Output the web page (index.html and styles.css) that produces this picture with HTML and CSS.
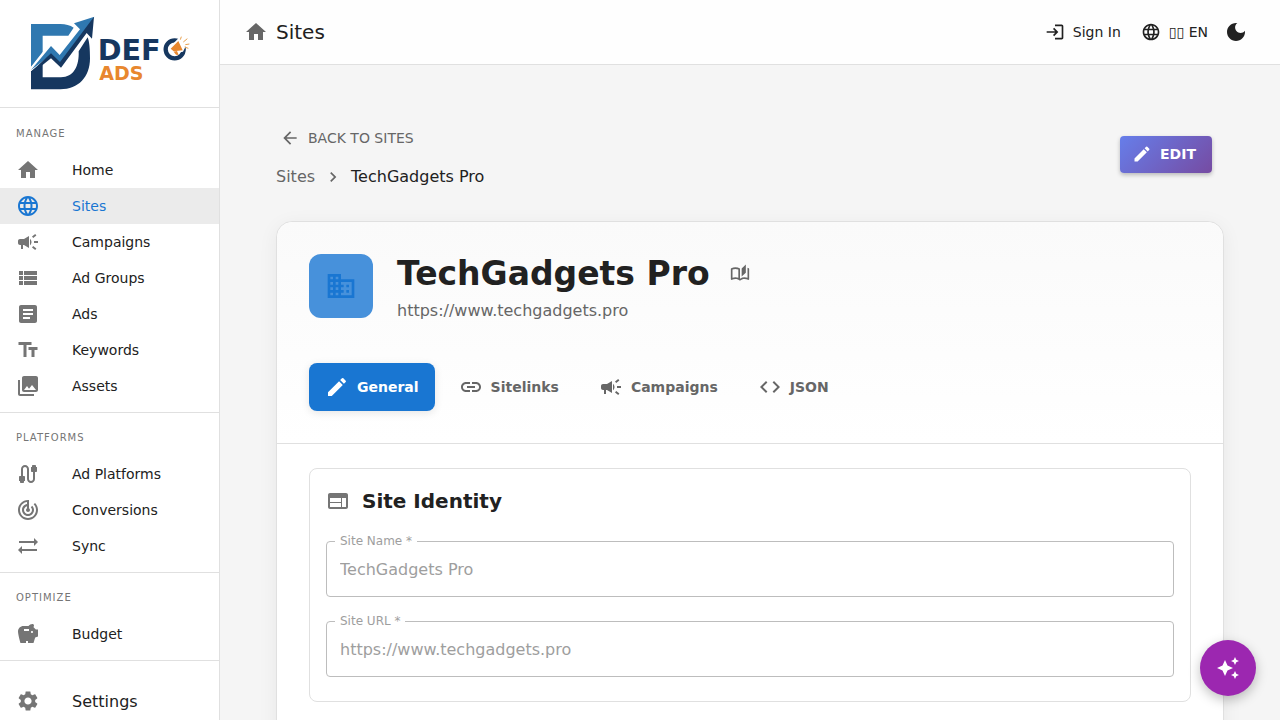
FILE: index.html
```html
<!DOCTYPE html>
<html lang="en">
<head>
    <meta charset="UTF-8">
    <meta name="viewport" content="width=device-width, initial-scale=1.0">
    <title>TechGadgets Pro - Defo Ads</title>
    <link rel="stylesheet" href="styles.css">
</head>
<body>
    <!-- Icon set -->
    <svg class="sprite" aria-hidden="true">
        <symbol id="i-home" viewBox="0 0 24 24"><path d="M10 20v-6h4v6h5v-8h3L12 3 2 12h3v8z"/></symbol>
        <symbol id="i-globe" viewBox="0 0 24 24"><path d="M11.99 2C6.47 2 2 6.48 2 12s4.47 10 9.99 10C17.52 22 22 17.52 22 12S17.52 2 11.99 2zm6.93 6h-2.95c-.32-1.25-.78-2.45-1.38-3.56 1.84.63 3.37 1.91 4.33 3.56zM12 4.04c.83 1.2 1.48 2.53 1.91 3.96h-3.82c.43-1.43 1.08-2.76 1.91-3.96zM4.26 14C4.1 13.36 4 12.69 4 12s.1-1.36.26-2h3.38c-.08.66-.14 1.32-.14 2s.06 1.34.14 2H4.26zm.82 2h2.95c.32 1.25.78 2.45 1.38 3.56-1.84-.63-3.37-1.9-4.33-3.56zm2.95-8H5.08c.96-1.66 2.49-2.93 4.33-3.56C8.81 5.55 8.35 6.75 8.03 8zM12 19.96c-.83-1.2-1.48-2.53-1.91-3.96h3.82c-.43 1.43-1.08 2.76-1.91 3.96zM14.34 14H9.66c-.09-.66-.16-1.32-.16-2s.07-1.35.16-2h4.68c.09.65.16 1.32.16 2s-.07 1.34-.16 2zm.25 5.56c.6-1.11 1.06-2.31 1.38-3.56h2.95c-.96 1.65-2.49 2.93-4.33 3.56zM16.36 14c.08-.66.14-1.32.14-2s-.06-1.34-.14-2h3.38c.16.64.26 1.31.26 2s-.1 1.36-.26 2h-3.38z"/></symbol>
        <symbol id="i-campaign" viewBox="0 0 24 24"><path d="M18 11v2h4v-2h-4zM16 17.61c.96.71 2.21 1.65 3.2 2.39.4-.53.8-1.07 1.2-1.6-.99-.74-2.24-1.68-3.2-2.4-.4.54-.8 1.08-1.2 1.61zM20.4 5.6c-.4-.53-.8-1.07-1.2-1.6-.99.74-2.24 1.68-3.2 2.4.4.53.8 1.07 1.2 1.6.96-.72 2.21-1.65 3.2-2.4zM4 9c-1.1 0-2 .9-2 2v2c0 1.1.9 2 2 2h1v4h2v-4h1l5 3V6L8 9H4zM15.5 12c0-1.33-.58-2.53-1.5-3.35v6.69c.92-.81 1.5-2.01 1.5-3.34z"/></symbol>
        <symbol id="i-list" viewBox="0 0 24 24"><path d="M3 14h4v-4H3v4zm0 5h4v-4H3v4zM3 9h4V5H3v4zm5 5h13v-4H8v4zm0 5h13v-4H8v4zM8 5v4h13V5H8z"/></symbol>
        <symbol id="i-article" viewBox="0 0 24 24"><path d="M19 3H5c-1.1 0-2 .9-2 2v14c0 1.1.9 2 2 2h14c1.1 0 2-.9 2-2V5c0-1.1-.9-2-2-2zm-5 14H7v-2h7v2zm3-4H7v-2h10v2zm0-4H7V7h10v2z"/></symbol>
        <symbol id="i-text" viewBox="0 0 24 24"><path d="M2.5 4v3h5v12h3V7h5V4h-13zm19 5h-9v3h3v7h3v-7h3V9z"/></symbol>
        <symbol id="i-photos" viewBox="0 0 24 24"><path d="M22 16V4c0-1.1-.9-2-2-2H8c-1.1 0-2 .9-2 2v12c0 1.1.9 2 2 2h12c1.1 0 2-.9 2-2zm-11-4 2.03 2.71L16 11l4 5H8l3-4zM2 6v14c0 1.1.9 2 2 2h14v-2H4V6H2z"/></symbol>
        <symbol id="i-cable" viewBox="0 0 24 24"><path d="M20 5V4c0-.55-.45-1-1-1h-2c-.55 0-1 .45-1 1v1h-1v4c0 .55.45 1 1 1h1v7c0 1.1-.9 2-2 2s-2-.9-2-2V7c0-2.21-1.79-4-4-4S5 4.79 5 7v7H4c-.55 0-1 .45-1 1v4h1v1c0 .55.45 1 1 1h2c.55 0 1-.45 1-1v-1h1v-4c0-.55-.45-1-1-1H7V7c0-1.1.9-2 2-2s2 .9 2 2v10c0 2.21 1.79 4 4 4s4-1.79 4-4v-7h1c.55 0 1-.45 1-1V5h-1z"/></symbol>
        <symbol id="i-track" viewBox="0 0 24 24"><path d="m19.07 4.93-1.41 1.41C19.1 7.79 20 9.79 20 12c0 4.42-3.58 8-8 8s-8-3.58-8-8c0-4.08 3.05-7.44 7-7.93v2.02C8.16 6.57 6 9.03 6 12c0 3.31 2.69 6 6 6s6-2.69 6-6c0-1.66-.67-3.16-1.76-4.24l-1.41 1.41C15.55 9.9 16 10.9 16 12c0 2.21-1.79 4-4 4s-4-1.79-4-4c0-1.86 1.28-3.41 3-3.86v2.14c-.6.35-1 .98-1 1.72 0 1.1.9 2 2 2s2-.9 2-2c0-.74-.4-1.38-1-1.72V2h-1C6.48 2 2 6.48 2 12s4.48 10 10 10 10-4.48 10-10c0-2.76-1.12-5.26-2.93-7.07z"/></symbol>
        <symbol id="i-sync" viewBox="0 0 24 24"><path d="m22 8-4-4v3H3v2h15v3l4-4zM2 16l4 4v-3h15v-2H6v-3l-4 4z"/></symbol>
        <symbol id="i-savings" viewBox="0 0 24 24"><path d="m19.83 7.5-2.27-2.27c.07-.42.18-.81.32-1.15.08-.18.12-.37.12-.58 0-.83-.67-1.5-1.5-1.5-1.64 0-3.09.79-4 2h-5C4.46 4 2 6.46 2 9.5S4.5 21 4.5 21H10v-2h2v2h5.5l1.68-5.59 2.82-.94V7.5h-2.17zM13 9H8V7h5v2zm3 2c-.55 0-1-.45-1-1s.45-1 1-1 1 .45 1 1-.45 1-1 1z"/></symbol>
        <symbol id="i-settings" viewBox="0 0 24 24"><path d="M19.14 12.94c.04-.3.06-.61.06-.94 0-.32-.02-.64-.07-.94l2.03-1.58c.18-.14.23-.41.12-.61l-1.92-3.32c-.12-.22-.37-.29-.59-.22l-2.39.96c-.5-.38-1.03-.7-1.62-.94l-.36-2.54c-.04-.24-.24-.41-.48-.41h-3.84c-.24 0-.43.17-.47.41l-.36 2.54c-.59.24-1.13.57-1.62.94l-2.39-.96c-.22-.08-.47 0-.59.22L2.74 8.87c-.12.21-.08.47.12.61l2.03 1.58c-.05.3-.09.63-.09.94s.02.64.07.94l-2.03 1.58c-.18.14-.23.41-.12.61l1.92 3.32c.12.22.37.29.59.22l2.39-.96c.5.38 1.03.7 1.62.94l.36 2.54c.05.24.24.41.48.41h3.84c.24 0 .44-.17.47-.41l.36-2.54c.59-.24 1.13-.56 1.62-.94l2.39.96c.22.08.47 0 .59-.22l1.92-3.32c.12-.22.07-.47-.12-.61l-2.01-1.58zM12 15.6c-1.98 0-3.6-1.62-3.6-3.6s1.62-3.6 3.6-3.6 3.6 1.62 3.6 3.6-1.62 3.6-3.6 3.6z"/></symbol>
        <symbol id="i-login" viewBox="0 0 24 24"><path d="M11 7 9.6 8.4l2.6 2.6H2v2h10.2l-2.6 2.6L11 17l5-5-5-5zm9 12h-8v2h8c1.1 0 2-.9 2-2V5c0-1.1-.9-2-2-2h-8v2h8v14z"/></symbol>
        <symbol id="i-moon" viewBox="0 0 24 24"><path d="M12 3c-4.97 0-9 4.03-9 9s4.03 9 9 9 9-4.03 9-9c0-.46-.04-.92-.1-1.36-.98 1.37-2.58 2.26-4.4 2.26-2.98 0-5.4-2.42-5.4-5.4 0-1.81.89-3.42 2.26-4.4-.44-.06-.9-.1-1.36-.1z"/></symbol>
        <symbol id="i-back" viewBox="0 0 24 24"><path d="M20 11H7.83l5.59-5.59L12 4l-8 8 8 8 1.41-1.41L7.83 13H20v-2z"/></symbol>
        <symbol id="i-chevron" viewBox="0 0 24 24"><path d="M10 6 8.59 7.41 13.17 12l-4.58 4.59L10 18l6-6z"/></symbol>
        <symbol id="i-edit" viewBox="0 0 24 24"><path d="M3 17.25V21h3.75L17.81 9.94l-3.75-3.75L3 17.25zM20.71 7.04c.39-.39.39-1.02 0-1.41l-2.34-2.34a.9959.9959 0 0 0-1.41 0l-1.83 1.83 3.75 3.75 1.83-1.83z"/></symbol>
        <symbol id="i-business" viewBox="0 0 24 24"><path d="M12 7V3H2v18h20V7H12zM6 19H4v-2h2v2zm0-4H4v-2h2v2zm0-4H4V9h2v2zm0-4H4V5h2v2zm4 12H8v-2h2v2zm0-4H8v-2h2v2zm0-4H8V9h2v2zm0-4H8V5h2v2zm10 12h-8v-2h2v-2h-2v-2h2v-2h-2V9h8v10zm-2-8h-2v2h2v-2zm0 4h-2v2h2v-2z"/></symbol>
        <symbol id="i-book" viewBox="0 0 24 24"><path d="M22.47 5.2c-.47-.24-.96-.44-1.47-.61v12.03c-1.14-.41-2.31-.62-3.5-.62-1.9 0-3.78.54-5.5 1.58V5.48C10.38 4.55 8.51 4 6.5 4c-1.79 0-3.48.44-4.97 1.2-.33.16-.53.51-.53.88v12.08c0 .58.47.99 1 .99.16 0 .32-.04.48-.12C3.69 18.4 5.05 18 6.5 18c2.07 0 3.98.82 5.5 2 1.52-1.18 3.43-2 5.5-2 1.45 0 2.81.4 4.02 1.04.16.08.32.12.48.12.52 0 1-.41 1-.99V6.08c0-.37-.2-.72-.53-.88zM10 16.62C8.86 16.21 7.69 16 6.5 16s-2.36.21-3.5.62V6.71C4.11 6.24 5.28 6 6.5 6c1.2 0 2.39.25 3.5.72v9.9zM19 .5l-5 5V15l5-4.5V.5z"/></symbol>
        <symbol id="i-link" viewBox="0 0 24 24"><path d="M3.9 12c0-1.71 1.39-3.1 3.1-3.1h4V7H7c-2.76 0-5 2.24-5 5s2.24 5 5 5h4v-1.9H7c-1.71 0-3.1-1.39-3.1-3.1zM8 13h8v-2H8v2zm9-6h-4v1.9h4c1.71 0 3.1 1.39 3.1 3.1s-1.39 3.1-3.1 3.1h-4V17h4c2.76 0 5-2.24 5-5s-2.24-5-5-5z"/></symbol>
        <symbol id="i-code" viewBox="0 0 24 24"><path d="M9.4 16.6 4.8 12l4.6-4.6L8 6l-6 6 6 6 1.4-1.4zm5.2 0 4.6-4.6-4.6-4.6L16 6l6 6-6 6-1.4-1.4z"/></symbol>
        <symbol id="i-web" viewBox="0 0 24 24"><path d="M20 4H4c-1.1 0-1.99.9-1.99 2L2 18c0 1.1.9 2 2 2h16c1.1 0 2-.9 2-2V6c0-1.1-.9-2-2-2zm-5 14H4v-4h11v4zm0-5H4V9h11v4zm5 5h-4V9h4v9z"/></symbol>
        <symbol id="i-sparkle" viewBox="0 0 24 24"><path d="m19 9 1.25-2.75L23 5l-2.75-1.25L19 1l-1.25 2.75L15 5l2.75 1.25L19 9zm-7.5.5L9 4 6.5 9.5 1 12l5.5 2.5L9 20l2.5-5.5L17 12l-5.5-2.5zM19 15l-1.25 2.75L15 19l2.75 1.25L19 23l1.25-2.75L23 19l-2.75-1.25L19 15z"/></symbol>
    </svg>

    <div class="app">
        <aside class="sidebar">
            <a class="logo" href="#" aria-label="Defo Ads">
                <svg class="logo-img" viewBox="0 0 660 321">
                    <path fill="#2f78b0" d="M93 72h88q24 0 40 11l-16 24h-77v53L93 202z"/>
                    <path fill="#16375f" d="M93 214 128 186v46h55c38 0 55-34 53-78l27-42c5 14 7 33 7 63 0 56-34 93-89 93H93z"/>
                    <path fill="#fff" d="M88 207 152 125l26 26 50-66-14-16 26 19-61 84-26-24-60 64z"/>
                    <path fill="#2f78b0" d="m93 210 60-72 26 27 61-77-18-18 61-20-26 46-77 94-27-25z"/>
                    <path fill="#16375f" d="m93 216 60-56 27 26L282 50l-6 66-16-17-77 104-30-28-60 48z"/>
                    <text class="logo-name"><tspan x="293" y="180">DEF</tspan><tspan class="logo-sub" x="298" y="240">ADS</tspan></text>
                    <circle cx="524" cy="148" r="27" fill="none" stroke="#16375f" stroke-width="13"/>
                    <path fill="#fff" d="m507 143 30-30 24 18-12 24-32 6z"/>
                    <path fill="#e8872e" d="m512 146 23-23 13 28-27 3zM521 155l10-2 5 12-8-1z"/>
                    <path stroke="#e8a04e" stroke-width="3" d="m541 119 3-9M550 126l12-10M556 134l12-2M554 141l11 4"/>
                </svg>
            </a>
            <nav class="nav">
                <div class="nav-section">
                    <div class="nav-label">MANAGE</div>
                    <a class="nav-item" href="#"><svg class="icon"><use href="#i-home"/></svg>Home</a>
                    <a class="nav-item active" href="#"><svg class="icon"><use href="#i-globe"/></svg>Sites</a>
                    <a class="nav-item" href="#"><svg class="icon"><use href="#i-campaign"/></svg>Campaigns</a>
                    <a class="nav-item" href="#"><svg class="icon"><use href="#i-list"/></svg>Ad Groups</a>
                    <a class="nav-item" href="#"><svg class="icon"><use href="#i-article"/></svg>Ads</a>
                    <a class="nav-item" href="#"><svg class="icon"><use href="#i-text"/></svg>Keywords</a>
                    <a class="nav-item" href="#"><svg class="icon"><use href="#i-photos"/></svg>Assets</a>
                </div>
                <div class="nav-section">
                    <div class="nav-label">PLATFORMS</div>
                    <a class="nav-item" href="#"><svg class="icon"><use href="#i-cable"/></svg>Ad Platforms</a>
                    <a class="nav-item" href="#"><svg class="icon"><use href="#i-track"/></svg>Conversions</a>
                    <a class="nav-item" href="#"><svg class="icon"><use href="#i-sync"/></svg>Sync</a>
                </div>
                <div class="nav-section">
                    <div class="nav-label">OPTIMIZE</div>
                    <a class="nav-item" href="#"><svg class="icon"><use href="#i-savings"/></svg>Budget</a>
                </div>
                <div class="nav-section nav-footer">
                    <a class="nav-item large" href="#"><svg class="icon"><use href="#i-settings"/></svg>Settings</a>
                </div>
            </nav>
        </aside>

        <div class="main">
            <header class="topbar">
                <svg class="icon"><use href="#i-home"/></svg>
                <span class="topbar-title">Sites</span>
                <div class="topbar-actions">
                    <button class="top-btn" type="button"><svg class="icon small"><use href="#i-login"/></svg>Sign In</button>
                    <button class="top-btn" type="button"><svg class="icon small"><use href="#i-globe"/></svg>▯▯ EN</button>
                    <button class="top-btn theme-btn" type="button" aria-label="Toggle dark mode"><svg class="icon"><use href="#i-moon"/></svg></button>
                </div>
            </header>

            <main class="content">
                <div class="page-head">
                    <div>
                        <a class="back" href="#"><svg class="icon small"><use href="#i-back"/></svg>BACK TO SITES</a>
                        <div class="breadcrumb">
                            <a href="#">Sites</a>
                            <svg class="icon small"><use href="#i-chevron"/></svg>
                            <span class="current">TechGadgets Pro</span>
                        </div>
                    </div>
                    <button class="edit-btn" type="button"><svg class="icon small"><use href="#i-edit"/></svg>EDIT</button>
                </div>

                <div class="card">
                    <div class="card-head">
                        <div class="site">
                            <div class="site-avatar"><svg class="icon"><use href="#i-business"/></svg></div>
                            <div>
                                <div class="site-title">
                                    <h1>TechGadgets Pro</h1>
                                    <button class="help-btn" type="button" aria-label="Documentation"><svg class="icon small"><use href="#i-book"/></svg></button>
                                </div>
                                <div class="site-url">https://www.techgadgets.pro</div>
                            </div>
                        </div>
                        <div class="tabs">
                            <button class="tab active" type="button"><svg class="icon"><use href="#i-edit"/></svg>General</button>
                            <button class="tab" type="button"><svg class="icon"><use href="#i-link"/></svg>Sitelinks</button>
                            <button class="tab" type="button"><svg class="icon"><use href="#i-campaign"/></svg>Campaigns</button>
                            <button class="tab" type="button"><svg class="icon"><use href="#i-code"/></svg>JSON</button>
                        </div>
                    </div>
                    <div class="card-body">
                        <section class="panel">
                            <h2><svg class="icon"><use href="#i-web"/></svg>Site Identity</h2>
                            <div class="field">
                                <label for="siteName">Site Name *</label>
                                <input type="text" id="siteName" value="TechGadgets Pro" disabled>
                            </div>
                            <div class="field">
                                <label for="siteUrl">Site URL *</label>
                                <input type="text" id="siteUrl" value="https://www.techgadgets.pro" disabled>
                            </div>
                        </section>
                    </div>
                </div>
            </main>
        </div>
    </div>

    <button class="fab" type="button" aria-label="AI assistant"><svg class="icon"><use href="#i-sparkle"/></svg></button>
</body>
</html>
```
FILE: styles.css
```css
* {
    box-sizing: border-box;
}
body {
    margin: 0;
    font-family: "DejaVu Sans", Verdana, sans-serif;
    font-size: 14px;
    color: #212121;
    background: #f5f5f5;
}
a {
    color: inherit;
    text-decoration: none;
}
button {
    font-family: inherit;
    font-size: 14px;
    color: inherit;
    background: none;
    border: none;
    padding: 0;
    cursor: pointer;
}
h1, h2 {
    margin: 0;
}
.sprite {
    display: none;
}
.icon {
    width: 24px;
    height: 24px;
    fill: currentColor;
    flex-shrink: 0;
}
.icon.small {
    width: 20px;
    height: 20px;
}
.app {
    display: flex;
    height: 100vh;
    overflow: hidden;
}

/* Sidebar */
.sidebar {
    width: 220px;
    flex-shrink: 0;
    background: #fff;
    border-right: 1px solid #e0e0e0;
    overflow: hidden;
}
.logo {
    display: block;
    height: 108px;
    border-bottom: 1px solid #e0e0e0;
}
.logo-img {
    display: block;
    width: 220px;
    height: 107px;
}
.logo-name {
    font-size: 86px;
    font-weight: bold;
    fill: #16375f;
}
.logo-sub {
    font-size: 57px;
    fill: #e8872e;
}
.nav-section {
    border-top: 1px solid #e0e0e0;
    padding-bottom: 8px;
}
.nav-section:first-child {
    border-top-color: transparent;
}
.nav-label {
    padding: 17px 16px 10px;
    font-size: 10px;
    line-height: 16px;
    letter-spacing: 1px;
    color: #757575;
}
.nav-item {
    display: flex;
    align-items: center;
    gap: 32px;
    height: 36px;
    padding: 0 16px;
}
.nav-item .icon {
    color: #757575;
}
.nav-item.active {
    background: #ebebeb;
    color: #1976d2;
}
.nav-item.active .icon {
    color: #1976d2;
}
.nav-item.large {
    height: 48px;
    font-size: 16px;
}
.nav-footer {
    padding-top: 16px;
}

/* Top bar */
.main {
    flex: 1;
    min-width: 0;
}
.topbar {
    display: flex;
    align-items: center;
    gap: 8px;
    height: 65px;
    padding: 0 32px 0 24px;
    background: #fefefe;
    border-bottom: 1px solid #e0e0e0;
}
.topbar > .icon {
    color: #666;
}
.topbar-title {
    font-size: 20px;
}
.topbar-actions {
    display: flex;
    align-items: center;
    gap: 20px;
    margin-left: auto;
}
.top-btn {
    display: flex;
    align-items: center;
    gap: 8px;
}
.theme-btn {
    margin-left: -4px;
}

/* Page */
.content {
    padding: 56px;
}
.page-head {
    display: flex;
    justify-content: space-between;
    align-items: flex-start;
    padding: 7px 12px 32px 0;
}
.back {
    display: flex;
    align-items: center;
    gap: 8px;
    height: 20px;
    padding-left: 4px;
    color: #666;
}
.breadcrumb {
    display: flex;
    align-items: center;
    gap: 8px;
    margin-top: 17px;
    font-size: 16px;
    line-height: 24px;
    color: #666;
}
.current {
    color: #212121;
}
.edit-btn {
    display: flex;
    align-items: center;
    gap: 8px;
    height: 37px;
    margin-top: 8px;
    padding: 0 16px 1px 12px;
    font-weight: bold;
    color: #fff;
    background: linear-gradient(135deg, #667eea 0%, #764ba2 100%);
    border-radius: 4px;
    box-shadow: 0 2px 4px rgba(0,0,0,0.25);
}

/* Site card */
.card {
    background: #fff;
    border: 1px solid #e0e0e0;
    border-radius: 16px;
    box-shadow: 0 4px 20px rgba(0,0,0,0.06);
}
.card-head {
    padding: 32px;
    background: linear-gradient(180deg, #fafafa 0%, #fff 100%);
    border-bottom: 1px solid #e0e0e0;
    border-radius: 16px 16px 0 0;
}
.site {
    display: flex;
    gap: 24px;
    margin-bottom: 45px;
    height: 64px;
}
.site-avatar {
    display: flex;
    align-items: center;
    justify-content: center;
    width: 64px;
    height: 64px;
    border-radius: 12px;
    background: #4791db;
    color: #1976d2;
}
.site-avatar .icon {
    width: 32px;
    height: 32px;
}
.site-title {
    display: flex;
    align-items: center;
    gap: 20px;
}
.site-title h1 {
    font-size: 33px;
    line-height: 40px;
}
.help-btn {
    display: flex;
    color: #666;
}
.site-url {
    margin-top: 5px;
    font-size: 16px;
    line-height: 24px;
    color: #666;
}
.tabs {
    display: flex;
    gap: 8px;
}
.tab {
    display: flex;
    align-items: center;
    gap: 8px;
    height: 48px;
    padding: 0 16px;
    font-weight: bold;
    color: #666;
    border-radius: 8px;
}
.tab.active {
    color: #fff;
    background: #1976d2;
    box-shadow: 0 2px 8px rgba(0,0,0,0.1);
}
.card-body {
    padding: 24px 32px 48px;
}
.panel {
    padding: 20px 16px 24px;
    border: 1px solid #e0e0e0;
    border-radius: 8px;
}
.panel h2 {
    display: flex;
    align-items: center;
    gap: 12px;
    margin-bottom: 28px;
    font-size: 20px;
    line-height: 24px;
}
.panel h2 .icon {
    color: #757575;
}
.field {
    position: relative;
    margin-top: 24px;
}
.field label {
    position: absolute;
    top: -8px;
    left: 9px;
    padding: 0 5px;
    font-size: 12px;
    line-height: 16px;
    color: #9e9e9e;
    background: #fff;
}
.field input {
    display: block;
    width: 100%;
    height: 56px;
    padding: 0 13px;
    font-family: inherit;
    font-size: 16px;
    color: #9e9e9e;
    background: #fff;
    border: 1px solid #bdbdbd;
    border-radius: 4px;
}
.fab {
    position: fixed;
    right: 24px;
    bottom: 24px;
    display: flex;
    align-items: center;
    justify-content: center;
    width: 56px;
    height: 56px;
    border-radius: 50%;
    color: #fff;
    background: #9c27b0;
    box-shadow: 0 4px 12px rgba(0,0,0,0.25);
}
```
